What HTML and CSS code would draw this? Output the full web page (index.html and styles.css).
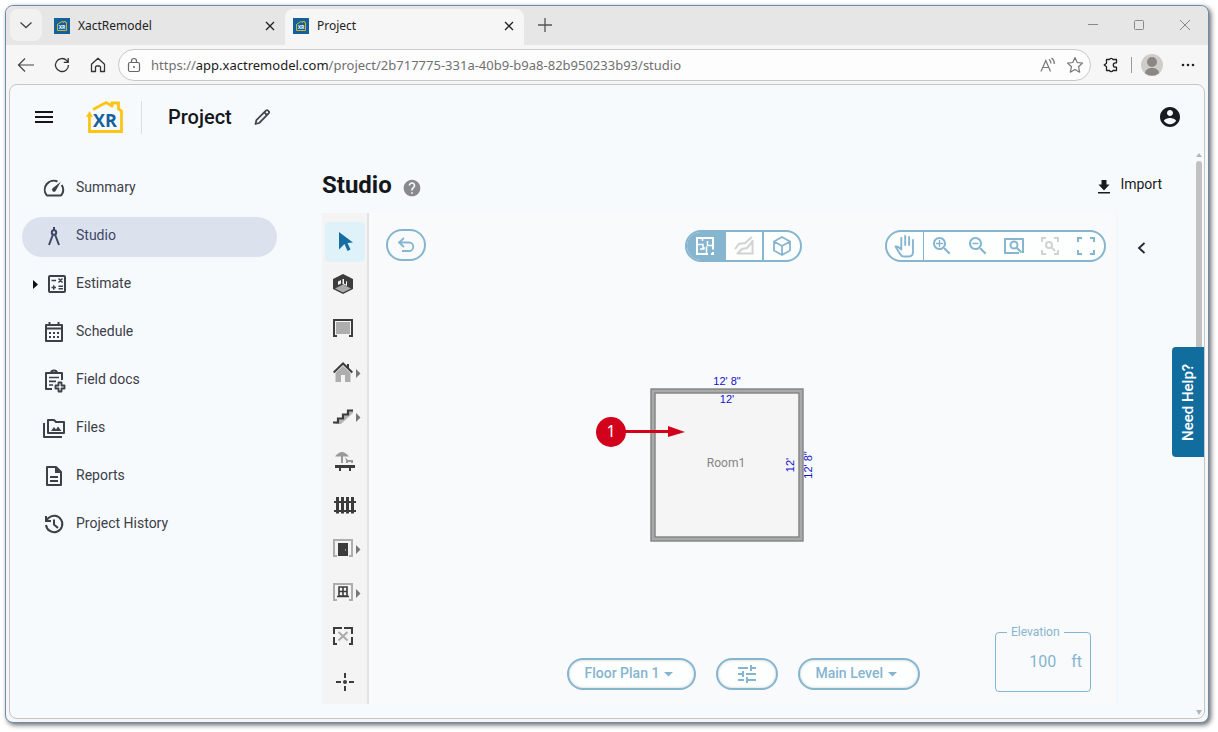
FILE: index.html
```html
<!DOCTYPE html>
<html lang="en">
<head>
<meta charset="utf-8">
<title>Project</title>
<link rel="stylesheet" href="styles.css">
</head>
<body>
<svg class="defs" aria-hidden="true">
  <symbol id="favicon" viewBox="0 0 16 16">
    <path fill="#14609c" d="M0 0h16v16H0z"/>
    <path fill="none" stroke="#c9b62c" d="M3.500 6v6.500h9V4.500h-1v-1h-2v1L8 3.500 4 6"/>
    <text x="8" y="11" text-anchor="middle" font-family="Open Sans, sans-serif" font-weight="700" font-size="5" fill="#fff">XR</text>
  </symbol>
  <symbol id="close" viewBox="0 0 12 12"><path fill="none" stroke="currentColor" stroke-width="1.300" d="M2 2l8 8M10 2l-8 8"/></symbol>
  <symbol id="lens" viewBox="0 0 24 24"><path d="M15.500 14h-.79l-.28-.27C15.410 12.590 16 11.110 16 9.500 16 5.910 13.090 3 9.500 3S3 5.910 3 9.500 5.910 16 9.500 16c1.610 0 3.090-.59 4.230-1.570l.27.28v.79l5 4.990L20.490 19l-4.990-5zm-6 0C7.010 14 5 11.990 5 9.500S7.010 5 9.500 5 14 7.010 14 9.500 11.990 14 9.500 14z"/></symbol>
  <symbol id="caret" viewBox="0 0 10 6"><path d="M0 1h9L4.500 5.500z"/></symbol>
  <symbol id="more" viewBox="0 0 5 12"><path fill="#777" d="M0 3l4.500 4.500L0 12z"/></symbol>
</svg>

<div class="window">
  <header class="tabs">
    <button class="tab-menu" aria-label="Tab actions"><svg width="14" height="8" viewBox="0 0 14 8"><path fill="none" stroke="#444" stroke-width="1.300" d="M1.500 1.500L7 6.500l5.500-5"/></svg></button>
    <div class="tab">
      <svg width="16" height="16"><use href="#favicon"/></svg><span>XactRemodel</span>
      <button aria-label="Close XactRemodel"><svg width="12" height="12"><use href="#close"/></svg></button>
    </div>
    <div class="tab active">
      <svg width="16" height="16"><use href="#favicon"/></svg><span>Project</span>
      <button aria-label="Close Project"><svg width="12" height="12"><use href="#close"/></svg></button>
    </div>
    <button class="new-tab" aria-label="New tab"><svg width="16" height="16" viewBox="0 0 16 16"><path stroke="#555" stroke-width="1.300" d="M8 1v14M1 8h14"/></svg></button>
    <div class="controls">
      <button aria-label="Minimize"><svg width="12" height="12" viewBox="0 0 12 12"><path stroke="#888" d="M1 5.500h10"/></svg></button>
      <button aria-label="Maximize"><svg width="12" height="12" viewBox="0 0 12 12"><rect x="1.500" y="1.500" width="9" height="9" rx="1" fill="none" stroke="#888"/></svg></button>
      <button aria-label="Close window"><svg width="12" height="12" viewBox="0 0 12 12"><path stroke="#888" d="M1 1l10 10M11 1L1 11"/></svg></button>
    </div>
  </header>

  <div class="toolbar">
    <button aria-label="Back"><svg width="18" height="16" viewBox="0 0 18 16"><path fill="none" stroke="#444" stroke-width="1.200" d="M17 8H1.500M8 1.500L1.500 8 8 14.500"/></svg></button>
    <button aria-label="Refresh"><svg width="16" height="16" viewBox="0 0 16 16"><path fill="none" stroke="#333" stroke-width="1.300" d="M14.500 8A6.500 6.500 0 1 1 12.600 3.400L14 5M14.200 1v4.300h-4.400"/></svg></button>
    <button aria-label="Home"><svg width="16" height="16" viewBox="0 0 16 16"><path fill="none" stroke="#333" stroke-width="1.300" stroke-linejoin="round" d="M1.500 7.200L8 1.200l6.500 6v7.300h-4V9.800L9.500 9h-3l-1 .8v4.700h-4z"/></svg></button>
    <div class="address">
      <svg width="14" height="16" viewBox="0 0 14 16"><g fill="none" stroke="#666" stroke-width="1.200"><rect x="1.500" y="5.500" width="11" height="9" rx="1.500"/><path d="M4.500 5.500V4a2.500 2.500 0 0 1 5 0v1.500"/></g><circle cx="7" cy="10" r="1" fill="#666"/></svg>
      <div class="url" role="textbox" aria-label="Address" contenteditable="true" spellcheck="false">https://<b>app.xactremodel.com</b>/project/2b717775-331a-40b9-b9a8-82b950233b93/studio</div>
      <button aria-label="Read aloud"><svg width="16" height="16" viewBox="0 0 16 16"><path fill="none" stroke="#777" stroke-width="1.200" d="M1 14.500L5.800 3.500l4.700 11M2.700 10.500h6.200M9 2.200q2 1.600 2 4.300M11.500 1q3 2.300 2.800 6"/></svg></button>
      <button aria-label="Add to favorites"><svg width="18" height="18" viewBox="0 0 18 18"><path fill="none" stroke="#777" stroke-width="1.200" stroke-linejoin="round" d="M9 1.500l2.200 5 5.300.6-4 3.600 1.200 5.500L9 13.400l-4.700 2.800 1.200-5.500-4-3.600 5.300-.6z"/></svg></button>
    </div>
    <button class="ext" aria-label="Extensions"><svg width="16" height="16" viewBox="0 0 16 16"><path fill="none" stroke="#222" stroke-width="1.300" stroke-linejoin="round" d="M3.500 2.500h3a1.800 1.800 0 0 1 3.400 0h3.600v3.300h-1a2.200 2.200 0 0 0 0 4.400h1v3.300H9.900a1.800 1.800 0 0 1-3.400 0h-3v-3.700L1.200 8l2.300-1.800z"/></svg></button>
    <span class="bar"></span>
    <button class="profile" aria-label="Profile"><svg width="22" height="22" viewBox="0 0 22 22"><circle cx="11" cy="11" r="11" fill="#cfcdca"/><circle cx="11" cy="8" r="5" fill="#8b8783"/><path fill="#8b8783" d="M4 19.300C4 16 7 14 11 14s7 2 7 5.300a11 11 0 0 1-14 0z"/></svg></button>
    <button class="dots" aria-label="Settings and more"><svg width="14" height="4" viewBox="0 0 14 4"><g fill="#222"><circle cx="2" cy="2" r="1.300"/><circle cx="7" cy="2" r="1.300"/><circle cx="12" cy="2" r="1.300"/></g></svg></button>
  </div>

  <div class="page">
    <header class="app-bar">
      <button aria-label="Menu"><svg width="18" height="12" viewBox="0 0 18 12"><path fill="#14141c" d="M0 0h18v2H0zM0 5h18v2H0zM0 10h18v2H0z"/></svg></button>
      <a class="logo" href="#" aria-label="XR home"><svg width="38" height="34" viewBox="0 0 38 34">
        <g fill="none" stroke="#fdc513" stroke-width="2.800"><path d="M3.500 14v17.500h32V11l-3-2V3H26v4"/><path d="M7 9.500L20 2.500l7 4"/></g>
        <path fill="#fdc513" d="M0 17l3.500-6L7 17z"/>
        <text x="19" y="27" text-anchor="middle" font-family="Open Sans, sans-serif" font-weight="700" font-size="18" fill="#14609c">XR</text>
      </svg></a>
      <span class="rule"></span>
      <h2>Project</h2>
      <button aria-label="Rename project"><svg width="18" height="18" viewBox="0 0 18 18"><g fill="none" stroke="#444750" stroke-width="1.800" stroke-linejoin="round"><path d="M2.500 16l.9-3.800L12.900 2.700c.8-.8 1.400-.8 2.100-.1l.7.7c.7.700.7 1.300-.1 2.100L6.200 15z"/><path d="M11.300 4.300l2.700 2.700"/></g></svg></button>
      <button class="account" aria-label="Account"><svg width="24" height="24" viewBox="0 0 24 24"><path fill="#171b22" d="M12 2C6.480 2 2 6.480 2 12s4.480 10 10 10 10-4.480 10-10S17.520 2 12 2zm0 3c1.660 0 3 1.340 3 3s-1.340 3-3 3-3-1.340-3-3 1.340-3 3-3zm0 14.200c-2.500 0-4.710-1.280-6-3.220.03-1.990 4-3.080 6-3.080 1.990 0 5.970 1.090 6 3.080-1.290 1.940-3.500 3.220-6 3.220z"/></svg></button>
    </header>

    <div class="body">
      <nav class="side">
        <a href="#"><svg width="24" height="24" viewBox="0 0 24 24"><path fill="none" stroke="currentColor" stroke-width="2" stroke-linejoin="round" d="M15.500 4.500A9 9 0 0 0 4.500 18q.3.500 1 .5h13q.7 0 1-.5A9 9 0 0 0 19.700 8"/><path fill="currentColor" d="M18.800 4.700l-5.200 9.400a2 2 0 1 1-3-2.800z"/></svg><span>Summary</span></a>
        <a href="#" class="current" aria-current="page"><svg width="24" height="24" viewBox="0 0 24 24"><g fill="none" stroke="currentColor" stroke-width="2"><circle cx="12" cy="7.500" r="2.200"/><path d="M12 2v3M10.800 10L7 20M13.200 10L17 20"/></g></svg><span>Studio</span></a>
        <a href="#" class="expandable"><svg class="twist" width="10" height="10" viewBox="0 0 10 10"><path fill="#111" d="M1 0l5 4.500L1 9z"/></svg><svg width="24" height="24" viewBox="0 0 24 24"><g fill="none" stroke="currentColor" stroke-width="2"><rect x="7" y="3" width="16" height="16" rx="1"/></g><path fill="none" stroke="currentColor" stroke-width="1.500" d="M9.500 7.500h4.500M16.500 5.500l4 4M20.500 5.500l-4 4M9.500 14.500h4.500M11.750 12.200v4.600M16.500 13.200h4.500M16.500 15.800h4.500"/></svg><span>Estimate</span></a>
        <a href="#"><svg width="24" height="24" viewBox="0 0 24 24"><path fill="none" stroke="currentColor" stroke-width="2" stroke-linejoin="round" d="M4 4h16v16H4zM4 7.500h16M7.500 1v4M16.500 1v4"/><path fill="currentColor" d="M7 11h2v2H7zM11 11h2v2h-2zM15 11h2v2h-2zM7 15h2v2H7zM11 15h2v2h-2zM15 15h2v2h-2z"/></svg><span>Schedule</span></a>
        <a href="#"><svg width="24" height="24" viewBox="0 0 24 24"><g fill="none" stroke="currentColor" stroke-width="2" stroke-linejoin="round"><path d="M10 20H4V4h16v7M9 4a3 2.500 0 0 1 6 0"/><path d="M7 8.500h10M7 12.300h7M7 16h4" stroke-width="1.700"/><path stroke-width="1.800" d="M16.500 13.500h3v3h3v3h-3v3h-3v-3h-3v-3h3z"/></g></svg><span>Field docs</span></a>
        <a href="#"><svg width="24" height="24" viewBox="0 0 24 24"><path fill="none" stroke="currentColor" stroke-width="2" stroke-linejoin="round" d="M6 3h6l2 2h8v11H6zM2 6v14h18"/><path fill="currentColor" d="M9 14l3-4 2 2.500 2-3 3.500 4.500z"/></svg><span>Files</span></a>
        <a href="#"><svg width="24" height="24" viewBox="0 0 24 24"><path fill="none" stroke="currentColor" stroke-width="2" stroke-linejoin="round" d="M5 2h9l5 5v13H5z"/><path fill="currentColor" d="M13 2v6h6zM8 11h8v2H8zM8 15h8v2H8z"/></svg><span>Reports</span></a>
        <a href="#"><svg width="24" height="24" viewBox="0 0 24 24"><path fill="none" stroke="currentColor" stroke-width="2" d="M4 12a8.200 8.200 0 1 0 2.500-7L4 7.500M4 3v5h5M12 6.500v5l4 3.500"/></svg><span>Project History</span></a>
      </nav>

      <main>
        <div class="title">
          <h1>Studio</h1>
          <button aria-label="Help"><svg width="20" height="20" viewBox="0 0 24 24"><path fill="#8a8a8d" d="M12 2C6.480 2 2 6.480 2 12s4.480 10 10 10 10-4.480 10-10S17.520 2 12 2zm1 17h-2v-2h2v2zm2.070-7.750l-.9.920C13.450 12.900 13 13.500 13 15h-2v-.5c0-1.100.45-2.100 1.170-2.830l1.240-1.260c.37-.36.590-.86.590-1.410 0-1.100-.9-2-2-2s-2 .9-2 2H8c0-2.210 1.790-4 4-4s4 1.790 4 4c0 .88-.36 1.680-.93 2.250z"/></svg></button>
          <button class="import"><svg width="14" height="16" viewBox="0 0 14 16"><path fill="#171b22" d="M1 14h12v1.500H1zM4.500 2h5v4.500h3L7 12.500l-5.500-6h3z"/></svg><span>Import</span></button>
        </div>

        <section class="studio">
          <div class="tools">
            <button class="selected" aria-label="Select"><svg width="24" height="24" viewBox="0 0 24 24"><path fill="#156ea3" d="M6 2l14 10.500-5.500.5 3 6.500-3 1.500-3-7L6 19.500z"/></svg></button>
            <div class="tool-list">
              <button aria-label="Room"><svg width="20" height="20" viewBox="0 0 20 20"><path fill="#3c3c3c" d="M10 0l10 5v10l-10 5-10-5V5z"/><path fill="#aaa" d="M10 10.500l8 4-8 4-8-4z"/><path fill="#f4f4f4" d="M5 7.500L8 6v3.500L5 11zM9.500 5H11v4.500l2 1V7l1 .5v4.500l-4.500-2z"/></svg></button>
              <button aria-label="Wall"><svg width="20" height="20" viewBox="0 0 20 20"><path fill="#aeaeae" d="M3 4h14v12H3z"/><path fill="none" stroke="#3c3c3c" stroke-width="2" d="M4 18H1V2h18v16h-3"/></svg></button>
              <button aria-label="Roof"><svg width="20" height="20" viewBox="0 0 20 20"><path fill="#aeaeae" d="M10 4l7.500 7v9H12v-7H8v7H2.500v-9z"/><path fill="none" stroke="#3c3c3c" stroke-width="2" d="M.700 10.500L10 1.500l9.300 9M15 2v4"/></svg><svg width="5" height="12"><use href="#more"/></svg></button>
              <button aria-label="Stairs"><svg width="20" height="20" viewBox="0 0 20 20"><path fill="#b5b5b5" d="M2 18h6L20 7V4h-3z"/><path fill="none" stroke="#3c3c3c" stroke-width="2.200" d="M0 16.500h5v-4h5v-4h5v-4h5"/></svg><svg width="5" height="12"><use href="#more"/></svg></button>
              <button aria-label="Deck"><svg width="24" height="22" viewBox="0 0 24 22"><path fill="#999" d="M2 7.500Q9-1.500 16 7.500zM8 6h2v8H8zM12 8l3 3h5v3h-2v-1h-3v1h-2v-3z"/><path fill="#3c3c3c" d="M2 16h20v3H2zM6 18h2v4H6zM16 18h2v4h-2z"/></svg></button>
              <button aria-label="Fence"><svg width="24" height="20" viewBox="0 0 24 20"><path fill="none" stroke="#3c3c3c" stroke-width="2" d="M1 8h22M1 17h22"/><path fill="none" stroke="#3c3c3c" stroke-width="3" d="M4.500 3v16.500M9.500 3v16.500M14.500 3v16.500M19.500 3v16.500"/></svg></button>
              <button aria-label="Door"><svg width="20" height="20" viewBox="0 0 20 20"><path fill="none" stroke="#aeaeae" stroke-width="2" d="M4 18H1V2h18v16h-3"/><path fill="#3c3c3c" d="M5 5h10v13H5z"/><path fill="#999" d="M12 11h1v2h-1z"/></svg><svg width="5" height="12"><use href="#more"/></svg></button>
              <button aria-label="Window"><svg width="20" height="20" viewBox="0 0 20 20"><path fill="none" stroke="#aeaeae" stroke-width="2" d="M4 18H1V2h18v16h-3"/><path fill="none" stroke="#3c3c3c" stroke-width="1.600" d="M6 5h8v9H6zM10 5v9M6 9.500h8M4 14.500h12"/></svg><svg width="5" height="12"><use href="#more"/></svg></button>
              <button aria-label="Opening"><svg width="20" height="20" viewBox="0 0 20 20"><path fill="none" stroke="#3c3c3c" stroke-width="2" d="M1 8V2h8M11 2h8v6M1 11v7h3M19 11v7h-3"/><path stroke="#aaa" stroke-width="2" d="M5.500 6l9 8.500M14.500 6l-9 8.500"/></svg></button>
              <button aria-label="Reference point"><svg width="24" height="24" viewBox="0 0 24 24"><path stroke="#3c3c3c" stroke-width="2" d="M12 5v5M12 18v5M3 14h5M16 14h5"/><circle cx="12" cy="14" r="2" fill="#3c3c3c"/></svg></button>
            </div>
          </div>

          <div class="canvas">
            <div class="top">
              <button class="undo" aria-label="Undo"><svg width="18" height="16" viewBox="0 0 18 16"><path fill="none" stroke="currentColor" stroke-width="1.800" d="M7 1L2 5.500l5 4.500M2 5.500h10a4 4 0 0 1 0 8.500H5"/></svg></button>
              <div class="group modes">
                <button class="on" aria-label="Floor plan"><svg width="20" height="20" viewBox="0 0 20 20"><path fill="none" stroke="#fff" stroke-width="2" d="M18 13.500V2H2v16h11M18 16v2h-2"/><path fill="none" stroke="#fff" stroke-width="1.500" d="M7.500 2v3M2 8.500h6V13M5 13h4v-2M12.500 5v4.500H18M11.500 18v-7.500"/></svg></button>
                <button class="off" disabled aria-label="Elevation profile"><svg width="20" height="20" viewBox="0 0 20 20"><path fill="none" stroke="#d2d2d2" stroke-width="2" d="M1 13l4-5 6-1 7-6M4 17.500h14.500V4M3 18l5-5 5-1 5-6"/></svg></button>
                <button aria-label="3D view"><svg width="20" height="20" viewBox="0 0 20 20"><path fill="none" stroke="currentColor" stroke-width="1.800" stroke-linejoin="round" d="M10 1l8 4.500v9L10 19l-8-4.500v-9zM2 5.500l8 4.500 8-4.500M10 10v9"/></svg></button>
              </div>
              <div class="group view">
                <button aria-label="Pan"><svg width="22" height="24" viewBox="0 0 22 24"><path fill="none" stroke="currentColor" stroke-width="1.900" stroke-linecap="round" stroke-linejoin="round" d="M7.300 12V4M11.200 11V2M15.100 11V3M19 11V6M19 9v9q0 4.500-4.500 4.500H10q-2.500 0-4-2.500L1.500 12.500q2-.8 5.800 3V11"/></svg></button>
                <button aria-label="Zoom in"><svg width="24" height="24" viewBox="0 0 24 24"><use href="#lens"/><path d="M13 10.200h-2.800V13H8.800v-2.800H6V8.800h2.800V6h1.400v2.800H13z"/></svg></button>
                <button aria-label="Zoom out"><svg width="24" height="24" viewBox="0 0 24 24"><use href="#lens"/><path d="M6.500 8.700h6v1.600h-6z"/></svg></button>
                <button aria-label="Zoom to fit"><svg width="24" height="24" viewBox="0 0 24 24"><g fill="none" stroke="currentColor" stroke-width="2" stroke-linejoin="round"><path d="M21 19V5H3v14h14"/><circle cx="12" cy="11" r="3.500"/><path d="M14.500 13.500l5 5"/></g></svg></button>
                <button class="off" disabled aria-label="Zoom to selection"><svg width="24" height="24" viewBox="0 0 24 24"><g fill="none" stroke="#d2d2d2" stroke-width="2"><path d="M4 8V4h4M16 4h4v4M20 16v4h-4M8 20H4v-4"/><circle cx="11" cy="11" r="3"/><path d="M13 13l4 4"/></g></svg></button>
                <button aria-label="Full screen"><svg width="24" height="24" viewBox="0 0 24 24"><path fill="none" stroke="currentColor" stroke-width="2" d="M4 8V4h4M16 4h4v4M20 16v4h-4M8 20H4v-4"/></svg></button>
              </div>
            </div>

            <svg class="plan" width="220" height="170" viewBox="0 0 220 170" font-family="Liberation Sans, Arial, sans-serif">
              <rect x="56" y="17" width="148" height="148" fill="#f5f5f5" stroke="#a9a9a9" stroke-width="5"/>
              <rect x="54" y="15" width="152" height="152" fill="none" stroke="#777"/>
              <rect x="58" y="19" width="144" height="144" fill="none" stroke="#777"/>
              <g fill="#1010d0" font-size="11" text-anchor="middle">
                <text x="130" y="11">12' 8"</text>
                <text x="130" y="29">12'</text>
                <text transform="translate(197 91) rotate(-90)">12'</text>
                <text transform="translate(215 91) rotate(-90)">12' 8"</text>
              </g>
              <text x="129" y="93" text-anchor="middle" font-family="Roboto, sans-serif" font-size="12" fill="#858585">Room1</text>
              <path fill="#d2021c" d="M28 56h43v-4l17 6-17 5v-4H28z"/>
              <circle cx="14" cy="58" r="15" fill="#d2021c"/>
              <text x="14" y="63" text-anchor="middle" font-family="Noto Sans, sans-serif" font-size="16" fill="#fff">1</text>
            </svg>

            <div class="bottom">
              <div class="pickers">
                <label class="pill"><select aria-label="Floor plan"><option>Floor Plan 1</option></select><svg width="10" height="6"><use href="#caret"/></svg></label>
                <button class="pill" aria-label="Settings"><svg width="24" height="24" viewBox="0 0 24 24"><path d="M3 17v2h6v-2H3zM3 5v2h10V5H3zm10 16v-2h8v-2h-8v-2h-2v6h2zM7 9v2H3v2h4v2h2V9H7zm14 4v-2H11v2h10zm-6-4h2V7h4V5h-4V3h-2v6z"/></svg></button>
                <label class="pill"><select aria-label="Level"><option>Main Level</option></select><svg width="10" height="6"><use href="#caret"/></svg></label>
              </div>
              <fieldset class="elevation">
                <legend><label for="elev">Elevation</label></legend>
                <div><input id="elev" type="text" value="100"><span>ft</span></div>
              </fieldset>
            </div>
          </div>

          <aside class="drawer"><button aria-label="Open panel"><svg width="10" height="12" viewBox="0 0 10 12"><path fill="none" stroke="#1c2733" stroke-width="1.800" d="M8.500 1L3 6l5.500 5"/></svg></button></aside>
        </section>
      </main>

      <div class="scroll" aria-hidden="true">
        <svg width="6" height="4" viewBox="0 0 6 4"><path fill="#b5b5b5" d="M0 4h6L3 0z"/></svg>
        <div class="thumb"></div>
        <svg width="6" height="5" viewBox="0 0 6 5"><path fill="#b5b5b5" d="M0 0h6L3 5z"/></svg>
      </div>
    </div>
    <button class="help-tab">Need Help?</button>
  </div>
</div>
</body>
</html>
```
FILE: styles.css
```css
* { box-sizing: border-box; }
html { height: 100%; }
body {
  height: 100%;
  margin: 0;
  padding: 5px 9px 9px 5px;
  background: #fff;
  font-family: Roboto, "Noto Sans", sans-serif;
  font-size: 14px;
  color: #3c4047;
}
.defs { display: none; }
button {
  display: flex;
  align-items: center;
  justify-content: center;
  flex: none;
  padding: 0;
  border: 0;
  background: none;
  color: inherit;
  font: inherit;
}
svg { flex: none; fill: currentColor; overflow: visible; }
a { color: inherit; text-decoration: none; }

.window {
  display: flex;
  flex-direction: column;
  height: 100%;
  border: 1px solid #6a8cab;
  border-radius: 8px;
  background: #f6f6f6;
  box-shadow: 2px 2px 5px 0 #0009;
}

/* Browser tabs */
.tabs {
  display: flex;
  flex: none;
  height: 39px;
  padding-left: 4px;
  border-radius: 8px 8px 0 0;
  background: #e6e6e6;
  font-family: "Noto Sans", sans-serif;
  font-size: 12px;
  color: #222;
}
.tab-menu { width: 32px; height: 32px; margin: 3px 4px 0 0; border-radius: 8px; background: #f1f1f1; }
.tab {
  display: flex;
  align-items: center;
  flex: 0 1 239px;
  gap: 8px;
  height: 39px;
  padding: 0 9px 0 8px;
}
.tab span { flex: 1; }
.active { height: 36px; margin-top: 3px; padding-bottom: 3px; border-radius: 8px 8px 0 0; background: #f6f6f6; }
.new-tab { width: 42px; height: 38px; }
.controls { display: flex; flex: none; margin-left: auto; }
.controls button { width: 46px; height: 38px; }

/* Browser toolbar */
.toolbar { display: flex; flex: none; align-items: center; height: 39px; padding: 0 2px; color: #222; }
.toolbar > button { width: 36px; height: 32px; }
.address {
  display: flex;
  align-items: center;
  flex: 1;
  gap: 10px;
  height: 32px;
  margin: 0 2px;
  padding: 0 6px 0 8px;
  border: 1px solid #c9c9c9;
  border-radius: 16px;
  background: #fdfdfd;
}
.url {
  flex: 1;
  min-width: 0;
  overflow: hidden;
  white-space: nowrap;
  font-family: "Noto Sans", sans-serif;
  font-size: 13px;
  color: #707070;
}
.url b { font-weight: 400; color: #1b1b1b; }
.bar { width: 1px; height: 16px; margin: 0 2px; background: #999; }

/* Application */
.page {
  position: relative;
  display: flex;
  flex: 1;
  flex-direction: column;
  min-height: 0;
  margin: 0 3px 3px;
  border: 1px solid #c6c6c6;
  border-radius: 8px;
  background: #f7fafd;
}
.app-bar { display: flex; flex: none; align-items: center; height: 64px; padding: 0 22px 0 25px; }
.logo { display: flex; margin-left: 33px; }
.rule { width: 1px; height: 33px; margin: 0 26px 0 17px; background: #d9dde2; }
h2 { margin: 0 21px 0 0; font-size: 20px; font-weight: 500; line-height: 24px; color: #14171c; }
.account { margin-left: auto; }

.body { display: flex; flex: 1; min-height: 0; }
.side { display: flex; flex: none; flex-direction: column; gap: 8px; width: 267px; padding: 20px 0 0 12px; }
.side a { display: flex; align-items: center; gap: 10px; height: 40px; padding-left: 20px; border-radius: 20px; }
.side span { padding-bottom: 4px; }
.side .expandable { padding-left: 10px; gap: 0; }
.side .expandable span { padding-left: 10px; }
.side .current { background: #dce1ee; color: #3d4764; }

main { display: flex; flex: 1; flex-direction: column; min-width: 0; padding: 0 29px 14px 45px; }
.title { display: flex; flex: none; align-items: center; height: 64px; padding: 8px 4px 0 0; }
h1 { margin: 0 10px 0 0; padding-bottom: 1px; font-size: 24px; font-weight: 700; line-height: 28px; color: #14171c; }
.title button { padding-top: 6px; }
.title .import { gap: 9px; margin-left: auto; padding: 2px 0 0; color: #171b22; }
.import span { padding-bottom: 4px; }

.studio { display: flex; flex: 1; min-height: 0; }
.tools { flex: none; width: 47px; padding: 9px 3px; border-right: 2px solid #e3e3e3; background: #f4f4f4; }
.tools button { justify-content: flex-start; gap: 3px; width: 40px; height: 40px; padding-left: 8px; border-radius: 4px; }
.tools .selected { background: #e0f2f9; }
.tool-list { display: grid; gap: 4px; margin-top: 2px; }

.canvas {
  position: relative;
  display: flex;
  flex: 1;
  flex-direction: column;
  justify-content: space-between;
  min-width: 0;
  padding: 16px 10px 12px 11px;
  background: #f9fafc;
  color: #86b5d0;
}
.top, .bottom { display: grid; grid-template-columns: 1fr auto 1fr; }
.undo { width: 40px; height: 32px; margin-left: 6px; border: 2px solid; border-radius: 16px; }
.group { display: flex; height: 32px; margin-top: 1px; border: 2px solid; border-radius: 16px; overflow: hidden; background: #fdfefe; }
.modes button { width: 37px; }
.modes button + button { width: 38px; border-left: 2px solid #86b5d0; }
.modes .on { background: #86b5d0; }
.view { justify-self: end; }
.view button { width: 36px; }
.view button:first-child { width: 37px; border-right: 1px solid; }
.plan { position: absolute; top: 161px; left: calc(50% - 146px); }

.bottom { align-items: end; }
.pickers { display: flex; grid-column: 2; gap: 20px; padding-bottom: 2px; }
.pill {
  display: flex;
  align-items: center;
  gap: 4px;
  height: 32px;
  padding: 0 20px 0 16px;
  border: 2px solid;
  border-radius: 16px;
  background: #fdfefe;
  box-shadow: inset 0 0 3px #0003;
}
button.pill { padding: 0 17px; }
select { padding: 0 0 2px; border: 0; background: none; color: inherit; font: inherit; font-weight: 500; appearance: none; }
.elevation { justify-self: end; width: 96px; height: 66px; min-width: 0; margin: 0 15px 0 0; padding: 5px 8px 0 11px; border: 1px solid; border-radius: 4px; }
legend { padding: 0 4px; font-size: 12px; line-height: 13px; }
.elevation div { display: flex; align-items: center; gap: 15px; height: 34px; font-size: 16px; }
input { flex: 1; width: 0; min-width: 0; padding: 0; border: 0; background: none; color: inherit; font: inherit; text-align: right; }

.drawer { width: 50px; flex: none; padding: 26px 14px; border-left: 1px solid #f3f6f9; border-radius: 0 6px 6px 0; }
.drawer button { width: 20px; height: 18px; }

.scroll { display: flex; flex: none; flex-direction: column; align-items: center; width: 9px; padding: 4px 2px 3px 0; }
.thumb { flex: none; width: 6px; height: 230px; margin: 4px 0 auto; border-radius: 3px; background: #c1c1c1; }
.help-tab {
  position: absolute;
  top: 262px;
  right: 0;
  width: 32px;
  height: 110px;
  border-radius: 0 4px 4px 0;
  background: #126d9f;
  color: #fff;
  font-size: 15px;
  font-weight: 500;
  writing-mode: vertical-rl;
  transform: rotate(180deg);
}
```
